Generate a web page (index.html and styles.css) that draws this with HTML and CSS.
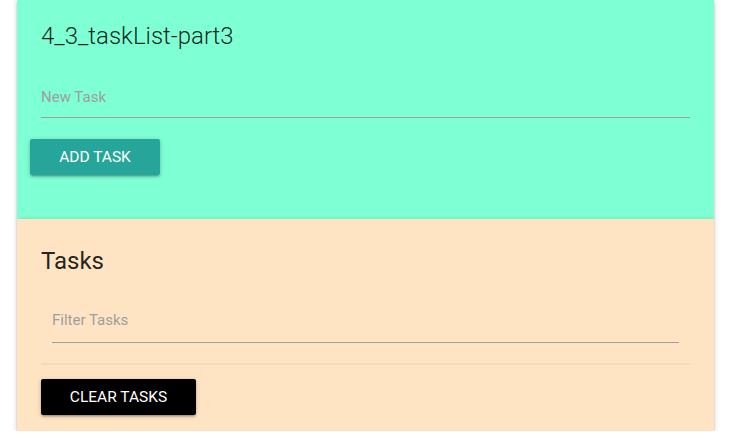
FILE: index.html
```html
<!DOCTYPE html>
<html lang="en">
<head>
<meta charset="utf-8">
<title>4_3_taskList-part3</title>
<link rel="stylesheet" href="styles.css">
</head>
<body>
<main class="page">
  <section class="card card-new">
    <h1 class="card-title light">4_3_taskList-part3</h1>
    <div class="field">
      <input class="text-input" type="text" placeholder="New Task">
    </div>
    <div class="actions">
      <button class="btn btn-teal" type="button">ADD TASK</button>
    </div>
  </section>
  <section class="card card-tasks">
    <h2 class="card-title">Tasks</h2>
    <div class="field field-inset">
      <input class="text-input" type="text" placeholder="Filter Tasks">
    </div>
    <div class="divider"></div>
    <div class="actions actions-flush">
      <button class="btn btn-black" type="button">CLEAR TASKS</button>
    </div>
  </section>
</main>
</body>
</html>
```

FILE: styles.css
```css
* {
  box-sizing: border-box;
}

html, body {
  margin: 0;
  padding: 0;
  background: #ffffff;
  font-family: Roboto, "Noto Sans", Arial, sans-serif;
  color: rgba(0, 0, 0, 0.87);
}

.page {
  padding: 0 16px 0 17px;
  display: flex;
  flex-direction: column;
}

.card {
  display: flex;
  flex-direction: column;
  box-shadow: 0 2px 2px 0 rgba(0, 0, 0, 0.14),
              0 3px 1px -2px rgba(0, 0, 0, 0.12),
              0 1px 5px 0 rgba(0, 0, 0, 0.2);
}

.card-new {
  background: #7fffd4;
  height: 219px;
  padding: 20px 24px 0;
}

.card-tasks {
  background: #ffe4c4;
  height: 212px;
  padding: 26px 24px 0;
}

.card-title {
  margin: 0;
  font-size: 24px;
  line-height: 32px;
  font-weight: 400;
  color: rgba(0, 0, 0, 0.87);
}

.card-title.light {
  font-weight: 300;
}

.field {
  margin-top: 19px;
}

.card-tasks .field {
  margin-top: 19px;
}

.field-inset {
  padding: 0 11px;
}

.text-input {
  display: block;
  width: 100%;
  height: 47px;
  padding: 6px 0 0;
  margin: 0;
  border: none;
  border-bottom: 1px solid #9e9e9e;
  background: transparent;
  font-family: Roboto, "Noto Sans", Arial, sans-serif;
  font-size: 15px;
  color: rgba(0, 0, 0, 0.87);
  outline: none;
}

.field-inset .text-input {
  padding-top: 2px;
}

.text-input::placeholder {
  color: #9e9e9e;
  opacity: 1;
}

.actions {
  display: flex;
  margin: 21px 0 0 -11px;
}

.actions-flush {
  margin: 14px 0 0 0;
}

.divider {
  margin-top: 20px;
  height: 2px;
  background: rgba(120, 80, 30, 0.07);
}

.btn {
  height: 36px;
  border: none;
  border-radius: 2px;
  font-family: Roboto, "Noto Sans", Arial, sans-serif;
  font-size: 15.5px;
  font-weight: 400;
  letter-spacing: 0;
  color: #ffffff;
  cursor: pointer;
  box-shadow: 0 2px 2px 0 rgba(0, 0, 0, 0.14),
              0 3px 1px -2px rgba(0, 0, 0, 0.12),
              0 1px 5px 0 rgba(0, 0, 0, 0.2);
}

.btn-teal {
  width: 130px;
  background: #26a69a;
}

.btn-black {
  width: 155px;
  background: #000000;
}
```
